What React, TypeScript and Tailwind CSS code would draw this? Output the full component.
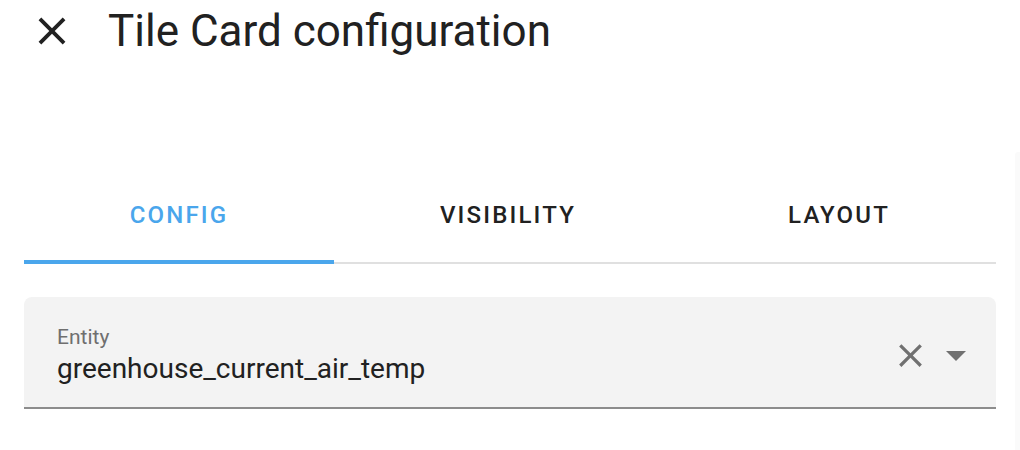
const tabs = [
  { label: "CONFIG", width: "w-[310px]", active: true },
  { label: "VISIBILITY", width: "w-[348px]", active: false },
  { label: "LAYOUT", width: "flex-1", active: false },
];

export default function App() {
  return (
    <div className="relative w-[1020px] h-[450px] bg-white font-['Roboto',sans-serif] overflow-hidden">
      {/* Header */}
      <div className="flex items-center h-[62px]">
        <button className="ml-[29px] w-[46px] h-[46px] flex items-center justify-center text-[#212121]">
          <svg viewBox="0 0 24 24" className="w-[46px] h-[46px]" fill="currentColor">
            <path d="M19,6.41L17.59,5L12,10.59L6.41,5L5,6.41L10.59,12L5,17.59L6.41,19L12,13.41L17.59,19L19,17.59L13.41,12L19,6.41Z" />
          </svg>
        </button>
        <h1 className="ml-[33px] text-[44px] leading-none text-[#212121]">
          Tile Card configuration
        </h1>
      </div>

      {/* Tabs */}
      <div className="mx-[24px] mt-[119px]">
        <div className="flex">
          {tabs.map((tab) => (
            <div
              key={tab.label}
              className={`${tab.width} h-[81px] pb-[13px] flex items-center justify-center text-[24px] font-medium tracking-[0.09em] ${
                tab.active ? "text-[#4aa6ec]" : "text-[#212121]"
              }`}
            >
              {tab.label}
            </div>
          ))}
        </div>
        <div className="relative h-[2px] bg-[#e0e0e0]">
          <div className="absolute left-0 bottom-0 w-[310px] h-[4px] bg-[#4aa6ec]" />
        </div>
      </div>

      {/* Entity field */}
      <div className="mx-[24px] mt-[33px] h-[112px] rounded-t-[8px] bg-[#f3f3f3] border-b-2 border-[#8c8c8c] flex items-center">
        <div className="flex-1 pl-[33px] pt-[5px]">
          <div className="text-[21px] leading-none text-[#6f6f6f]">Entity</div>
          <div className="mt-[7px] text-[28px] leading-none text-[#212121]">
            greenhouse_current_air_temp
          </div>
        </div>
        <div className="flex items-center pr-[16px] pt-[6px] text-[#707070]">
          <svg viewBox="0 0 24 24" className="w-[39px] h-[39px]" fill="currentColor">
            <path d="M19,6.41L17.59,5L12,10.59L6.41,5L5,6.41L10.59,12L5,17.59L6.41,19L12,13.41L17.59,19L19,17.59L13.41,12L19,6.41Z" />
          </svg>
          <svg viewBox="0 0 24 24" className="ml-[2px] w-[48px] h-[48px]" fill="currentColor">
            <path d="M7,10L12,15L17,10H7Z" />
          </svg>
        </div>
      </div>

      {/* faint scrollbar strip */}
      <div className="absolute right-0 top-[152px] w-[5px] h-[298px] bg-[#fafafa] rounded-tl-[3px]" />
    </div>
  );
}
